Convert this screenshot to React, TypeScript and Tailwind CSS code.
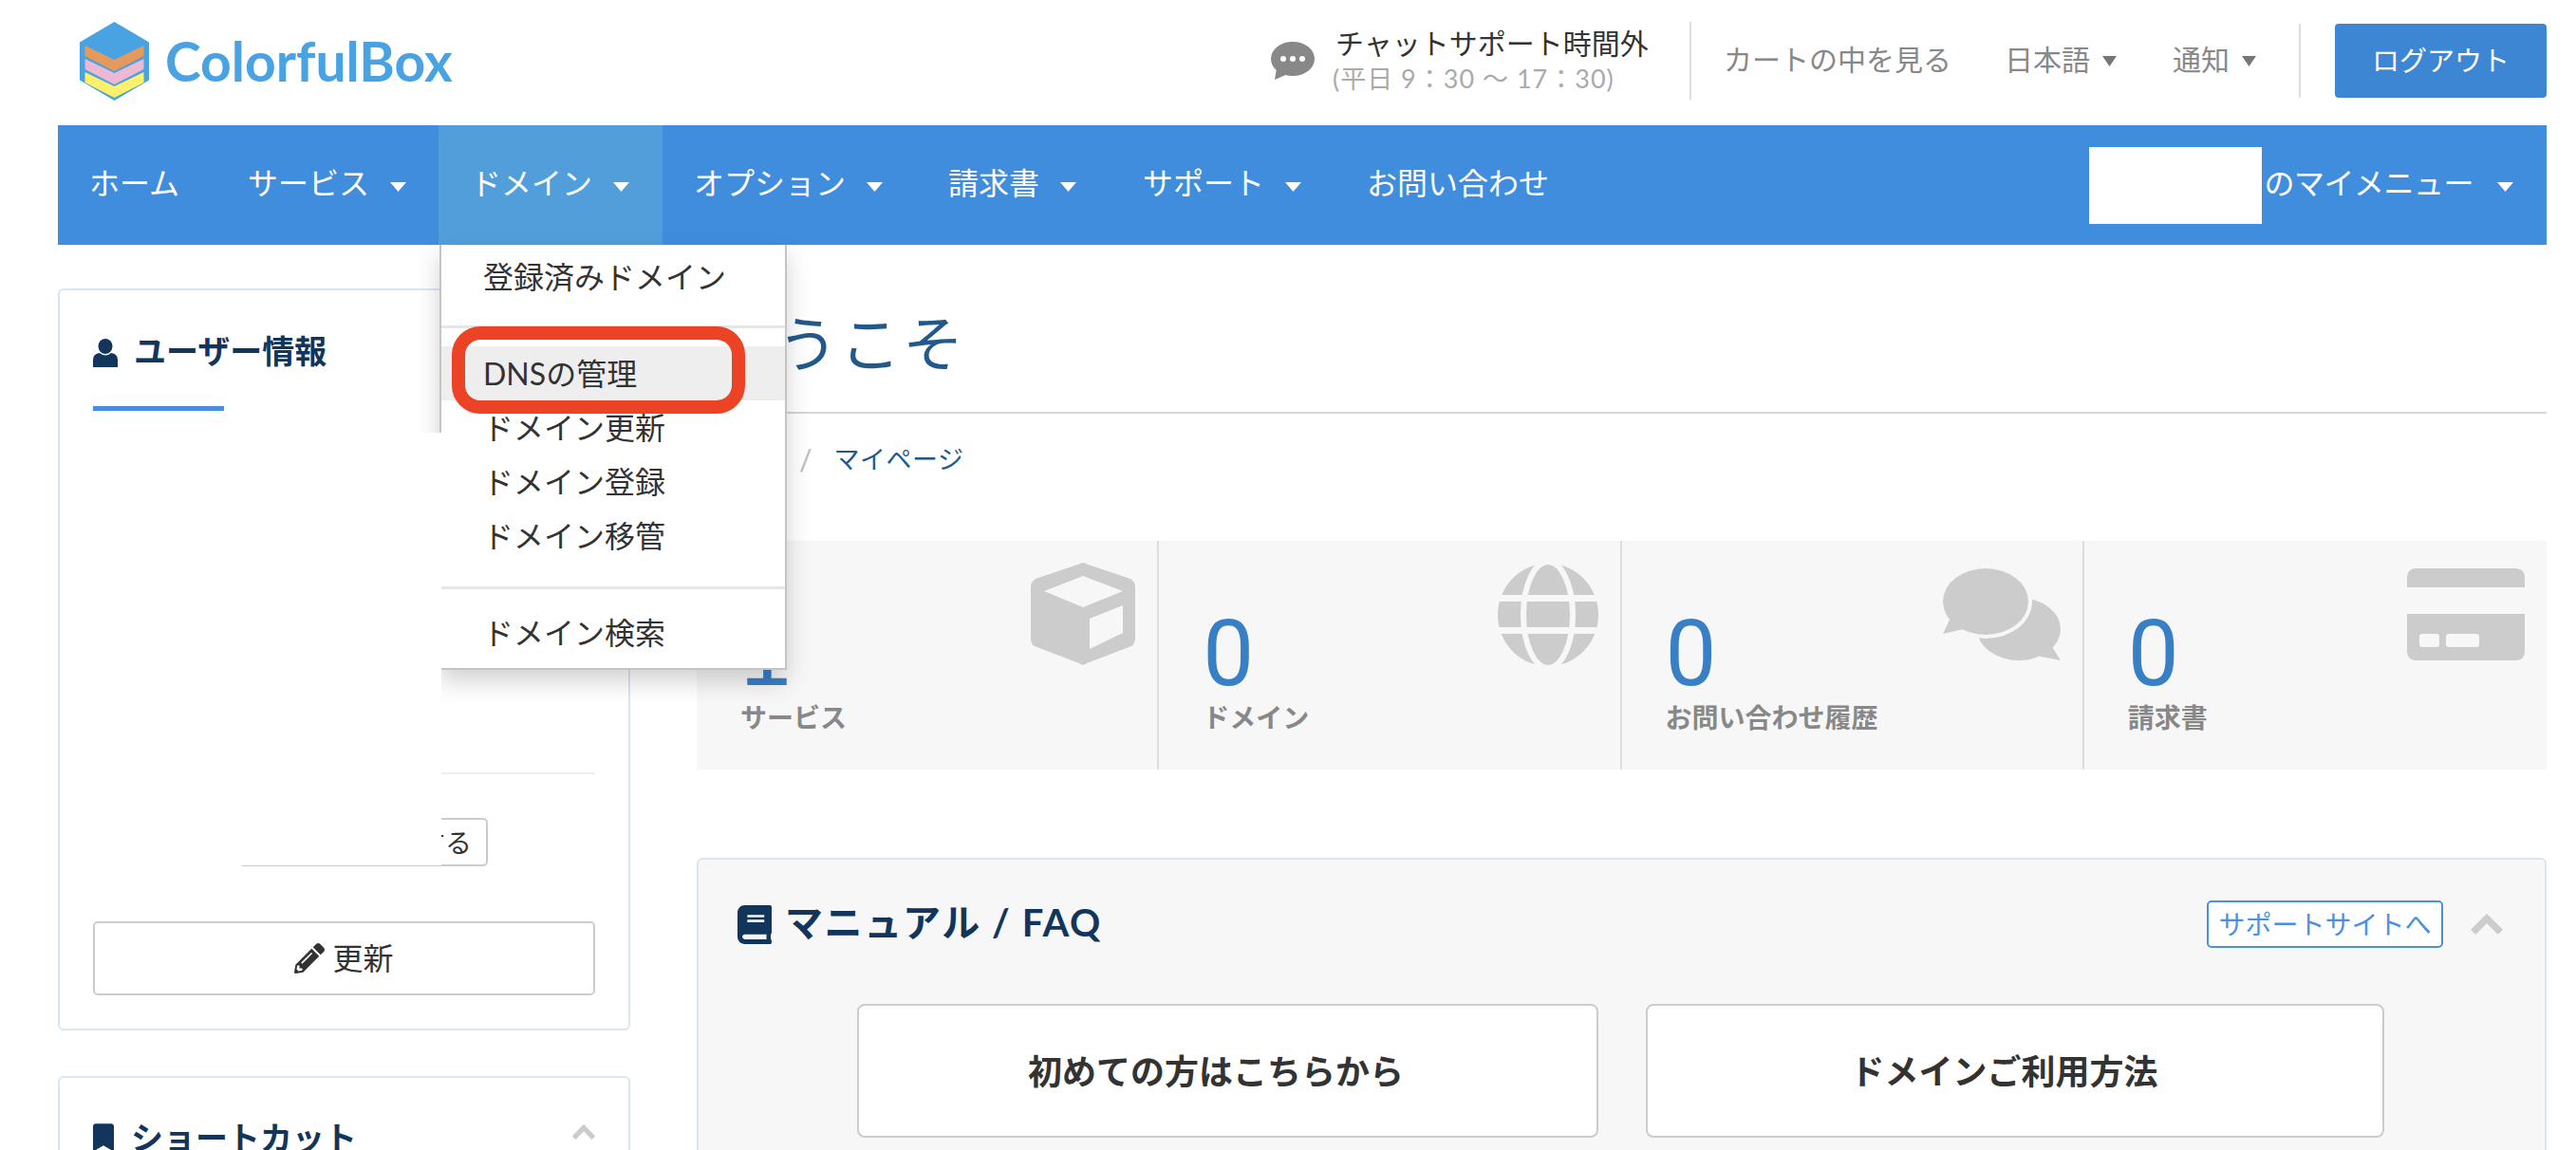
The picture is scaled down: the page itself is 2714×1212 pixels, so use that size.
import React from "react";
import { FaBook, FaBookmark, FaPencilAlt } from "react-icons/fa";

function Caret({ big = false, className = "" }: { big?: boolean; className?: string }) {
  return (
    <svg viewBox="0 0 17 10" className={(big ? "w-[17px] h-[10px] " : "w-[15px] h-[11px] ") + className} preserveAspectRatio="none">
      <path d="M0 0H17L8.5 10Z" fill="currentColor" />
    </svg>
  );
}

function Logo() {
  return (
    <svg viewBox="0 0 73 83" className="w-[73px] h-[83px] shrink-0">
      <path d="M36.5 0L73 21.5V61.5L36.5 83L0 61.5V21.5Z" fill="#49a3e3" />
      <path d="M5.5 25L36.5 40L67.5 25V36L36.5 52L5.5 36Z" fill="#e59a5c" />
      <path d="M5.5 39L36.5 54L67.5 39V50L36.5 66L5.5 50Z" fill="#ecb8d2" />
      <path d="M5.5 53L36.5 68L67.5 53V64L36.5 80L5.5 64Z" fill="#fdf06a" />
    </svg>
  );
}

function ChatIcon() {
  return (
    <svg viewBox="0 0 46 40" className="w-[46px] h-[40px] shrink-0">
      <ellipse cx="23" cy="18" rx="23" ry="18" fill="#888" />
      <path d="M6 28L4 40L20 33Z" fill="#888" />
      <circle cx="13" cy="18" r="3" fill="#fff" />
      <circle cx="23" cy="18" r="3" fill="#fff" />
      <circle cx="33" cy="18" r="3" fill="#fff" />
    </svg>
  );
}

function CubeIcon() {
  return (
    <svg viewBox="0 0 110 108" className="w-[110px] h-[108px]">
      <path
        fillRule="evenodd"
        fill="#ccc"
        d="M55 0Q57 0 59 1.5L105 17Q110 20 110 26V80Q110 85 106 88L59 106Q55 109 51 106L4 88Q0 85 0 80V26Q0 20 5 17L51 1.5Q53 0 55 0ZM55 14L14 30L55 47L97 30ZM62 59V91L97 74V45Z"
      />
    </svg>
  );
}

function GlobeIcon() {
  return (
    <svg viewBox="0 0 106 108" className="w-[106px] h-[108px]">
      <ellipse cx="53" cy="54" rx="53" ry="54" fill="#ccc" />
      <ellipse cx="53" cy="54" rx="26" ry="56" fill="none" stroke="#f7f7f7" strokeWidth="6" />
      <rect x="0" y="33" width="106" height="7" fill="#f7f7f7" />
      <rect x="0" y="67" width="106" height="7" fill="#f7f7f7" />
    </svg>
  );
}

function CommentsIcon() {
  return (
    <svg viewBox="0 0 124 97" className="w-[124px] h-[97px]">
      <ellipse cx="80" cy="64" rx="44" ry="33" fill="#ccc" />
      <path d="M112 78L124 97L98 92Z" fill="#ccc" />
      <ellipse cx="45" cy="35" rx="49" ry="39" fill="#f7f7f7" />
      <ellipse cx="45" cy="35" rx="45" ry="35" fill="#ccc" />
      <path d="M8 52L0 69L22 64Z" fill="#ccc" />
    </svg>
  );
}

function CardIcon() {
  return (
    <svg viewBox="0 0 124 97" className="w-[124px] h-[97px]">
      <path d="M0 20V10Q0 0 10 0H114Q124 0 124 10V20Z" fill="#ccc" />
      <path
        fillRule="evenodd"
        fill="#ccc"
        d="M0 48H124V87Q124 97 114 97H10Q0 97 0 87ZM16 69Q13 69 13 72V80Q13 83 16 83H31Q34 83 34 80V72Q34 69 31 69ZM44 69Q41 69 41 72V80Q41 83 44 83H73Q76 83 76 80V72Q76 69 73 69Z"
      />
    </svg>
  );
}

function UserIcon() {
  return (
    <svg viewBox="0 0 26 30" className="w-[26px] h-[30px] shrink-0">
      <ellipse cx="13" cy="8" rx="7.5" ry="8" fill="#12355b" />
      <path d="M0 30V22Q0 16 7 15Q13 20 19 15Q26 16 26 22V30Z" fill="#12355b" />
    </svg>
  );
}

function ChevronUp({ className = "" }: { className?: string }) {
  return (
    <svg viewBox="0 0 30 20" className={className} preserveAspectRatio="none">
      <path d="M3 17L15 5L27 17" fill="none" stroke="#ccc" strokeWidth="6" />
    </svg>
  );
}

function NavItem({ label, active = false, caret = true, w }: { label: string; active?: boolean; caret?: boolean; w: string }) {
  return (
    <div className={w + " h-full flex items-center text-[32px] text-white " + (active ? "bg-[#529edb]" : "")}>
      <span className="mt-[-4px]">{label}</span>
      {caret && <Caret big className="ml-[22px] mt-[4px]" />}
    </div>
  );
}

function Stat({ n, label, icon, border = true, top, numFont }: { n: string; label: string; icon: React.ReactNode; border?: boolean; top: string; numFont: string }) {
  return (
    <div className={"flex justify-between pl-[46px] pr-[23px] " + (border ? "border-r-2 border-[#dddddd]" : "")}>
      <div className="flex flex-col">
        <div className={"mt-[72px] h-[94px] flex items-center text-[96px] leading-none text-[#397fc6] " + numFont}>{n}</div>
        <div className="text-[28px] leading-[40px] font-bold text-[#888888]">{label}</div>
      </div>
      <div className={top}>{icon}</div>
    </div>
  );
}

function MenuRow({ label, hover = false }: { label: string; hover?: boolean }) {
  return (
    <div className={"h-[57px] flex items-center pl-[44px] text-[32px] text-[#333333] " + (hover ? "bg-[#eeeeee]" : "")}>{label}</div>
  );
}

export default function App() {
  return (
    <div className="relative w-[2714px] h-[1212px] overflow-hidden bg-white font-['Lato','Noto_Sans_CJK_JP',sans-serif]">
      <div className="ml-[61px] w-[2622px]">
        {/* header */}
        <header className="h-[132px] flex items-center justify-between">
          <div className="flex items-center ml-[23px] mt-[-3px]">
            <Logo />
            <span className="ml-[17px] text-[57px] leading-none font-bold text-[#49a3e3] font-['Lato',sans-serif]">ColorfulBox</span>
          </div>
          <div className="flex items-center mt-[-4px]">
            <ChatIcon />
            <div className="ml-[22px] flex flex-col w-[373px]">
              <div className="text-[30px] leading-[38px] text-[#333333]">チャットサポート時間外</div>
              <div className="text-[27px] leading-[38px] text-[#aaaaaa] tracking-[1px] ml-[-3px]">(平日 9：30 〜 17：30)</div>
            </div>
            <div className="w-[2px] h-[82px] bg-[#dddddd]" />
            <div className="ml-[34px] w-[296px] text-[30px] text-[#888888] mt-[-3px]">カートの中を見る</div>
            <div className="w-[175px] flex items-center text-[30px] text-[#888888] mt-[-3px]">
              <span>日本語</span>
              <Caret className="ml-[13px] mt-[3px] text-[#777777]" />
            </div>
            <div className="w-[135px] flex items-center text-[30px] text-[#888888] mt-[-3px] pl-[2px]">
              <span>通知</span>
              <Caret className="ml-[13px] mt-[3px] text-[#777777]" />
            </div>
            <div className="w-[2px] h-[78px] bg-[#dddddd]" />
            <div className="ml-[36px] w-[223px] h-[78px] rounded-[4px] bg-[#3c86d3] flex items-center justify-center text-[29px] text-white">ログアウト</div>
          </div>
        </header>

        {/* nav */}
        <nav className="h-[126px] bg-[#418ddd] flex items-center">
          <NavItem label="ホーム" caret={false} w="w-[165px] pl-[33px]" />
          <NavItem label="サービス" w="w-[236px] pl-[35px]" />
          <NavItem label="ドメイン" active w="w-[236px] pl-[34px]" />
          <NavItem label="オプション" w="w-[264px] pl-[33px]" />
          <NavItem label="請求書" w="w-[205px] pl-[37px]" />
          <NavItem label="サポート" w="w-[237px] pl-[37px]" />
          <NavItem label="お問い合わせ" caret={false} w="w-[355px] pl-[36px]" />
          <div className="ml-auto h-full flex items-center text-[32px] text-white">
            <div className="w-[182px] h-[81px] bg-white" />
            <span className="ml-[2px] mt-[-4px] tracking-[-0.5px]">のマイメニュー</span>
            <Caret big className="ml-[25px] mr-[35px] mt-[4px]" />
          </div>
        </nav>

        {/* body */}
        <div className="flex">
          <aside className="w-[603px] shrink-0 mt-[46px] text-[#333333]">
            <section className="h-[782px] border-2 border-[#dce6f1] rounded-[6px] px-[35px] pt-[51px]">
              <div className="flex items-center h-[30px]">
                <UserIcon />
                <h2 className="ml-[17px] mt-[-5px] text-[34px] font-bold text-[#12355b]">ユーザー情報</h2>
              </div>
              <div className="mt-[41px] w-[138px] h-[5px] bg-[#4a8de0]" />
              <div className="mt-[381px] h-[2px] bg-[#eeeeee]" />
              <div className="mt-[46px] ml-[153px] w-[263px] h-[51px] border-2 border-[#cccccc] rounded-[5px] flex items-center justify-end pr-[15px] text-[28px]">確認する</div>
              <button className="mt-[58px] w-[529px] h-[78px] border-2 border-[#cccccc] rounded-[5px] flex items-center justify-center gap-[8px] text-[32px]">
                <FaPencilAlt className="w-[32px] h-[32px] text-[#333333]" />
                更新
              </button>
            </section>
            <section className="mt-[48px] h-[300px] border-2 border-[#dce6f1] rounded-[6px] px-[35px] pt-[37px]">
              <div className="flex items-center justify-between">
                <div className="flex items-center">
                  <FaBookmark className="w-[22px] h-[30px] text-[#12355b]" />
                  <h2 className="ml-[18px] text-[34px] font-bold text-[#12355b]">ショートカット</h2>
                </div>
                <ChevronUp className="w-[26px] h-[18px] mt-[-12px] mr-[-1px]" />
              </div>
            </section>
          </aside>

          <main className="ml-[70px] flex-1 min-w-0">
            <div className="mt-[32px] h-[146px] border-b-2 border-[#cfd6dc] flex items-center pl-[19px] text-[64px] leading-none text-[#23598a]">
              <h1 className="font-normal tracking-[2px]">ようこそ</h1>
            </div>
            <div className="h-[96px] flex items-center text-[27px] text-[#23598a] pl-[8px]">
              <span className="w-[100px]">ホーム</span>
              <span className="text-[#bbbbbb] text-[30px]">/</span>
              <span className="ml-[23px] tracking-[0.5px]">マイページ</span>
            </div>
            <div className="mt-[38px] h-[241px] bg-[#f7f7f7] grid grid-cols-4">
              <Stat n="1" label="サービス" icon={<CubeIcon />} top="pt-[23px]" numFont="font-['Liberation_Sans',sans-serif]" />
              <Stat n="0" label="ドメイン" icon={<GlobeIcon />} top="pt-[24px]" numFont="font-['Roboto',sans-serif]" />
              <Stat n="0" label="お問い合わせ履歴" icon={<CommentsIcon />} top="pt-[29px]" numFont="font-['Roboto',sans-serif]" />
              <Stat n="0" label="請求書" icon={<CardIcon />} border={false} top="pt-[29px]" numFont="font-['Roboto',sans-serif]" />
            </div>
            <section className="mt-[93px] h-[400px] border-2 border-[#dce6f1] rounded-[6px] bg-[#f7f7f7]">
              <div className="mt-[43px] h-[50px] pl-[41px] pr-[43px] flex items-center justify-between">
                <div className="flex items-center">
                  <FaBook className="w-[36px] h-[43px] text-[#12355b]" />
                  <h2 className="ml-[14px] mt-[-5px] text-[40px] font-bold text-[#12355b] tracking-[1.6px]">マニュアル / FAQ</h2>
                </div>
                <div className="flex items-center">
                  <div className="w-[249px] h-[50px] border-2 border-[#4a90e2] rounded-[5px] bg-white flex items-center justify-center text-[28px] text-[#4a90e2]">サポートサイトへ</div>
                  <ChevronUp className="ml-[28px] w-[36px] h-[24px]" />
                </div>
              </div>
              <div className="mt-[59px] flex justify-center gap-[50px] pr-[3px]">
                <div className="w-[781px] h-[141px] bg-white border-2 border-[#cccccc] rounded-[8px] flex items-center justify-center pr-[24px] text-[36px] font-bold text-[#333333]">初めての方はこちらから</div>
                <div className="w-[778px] h-[141px] bg-white border-2 border-[#cccccc] rounded-[8px] flex items-center justify-center pr-[22px] text-[36px] font-bold text-[#333333]">ドメインご利用方法</div>
              </div>
            </section>
          </main>
        </div>
      </div>

      {/* open dropdown */}
      <div className="absolute left-[463px] top-[258px] w-[366px] h-[448px] bg-white border-x-2 border-b-2 border-[#c4c4c4] shadow-[0_12px_24px_rgba(0,0,0,0.18)]">
        <div className="mt-[5px]"><MenuRow label="登録済みドメイン" /></div>
        <div className="mt-[23px] h-[3px] bg-[#e6e6e6]" />
        <div className="mt-[19px]"><MenuRow label="DNSの管理" hover /></div>
        <MenuRow label="ドメイン更新" />
        <MenuRow label="ドメイン登録" />
        <MenuRow label="ドメイン移管" />
        <div className="mt-[25px] h-[3px] bg-[#e6e6e6]" />
        <div className="mt-[17px]"><MenuRow label="ドメイン検索" /></div>
      </div>

      {/* privacy mask in the screenshot */}
      <div className="absolute left-[97px] top-[456px] w-[368px] h-[456px] bg-white" />

      {/* callout */}
      <div className="absolute left-[476px] top-[344px] w-[309px] h-[92px] border-[14px] border-[#ec4225] rounded-[30px]" />
    </div>
  );
}
